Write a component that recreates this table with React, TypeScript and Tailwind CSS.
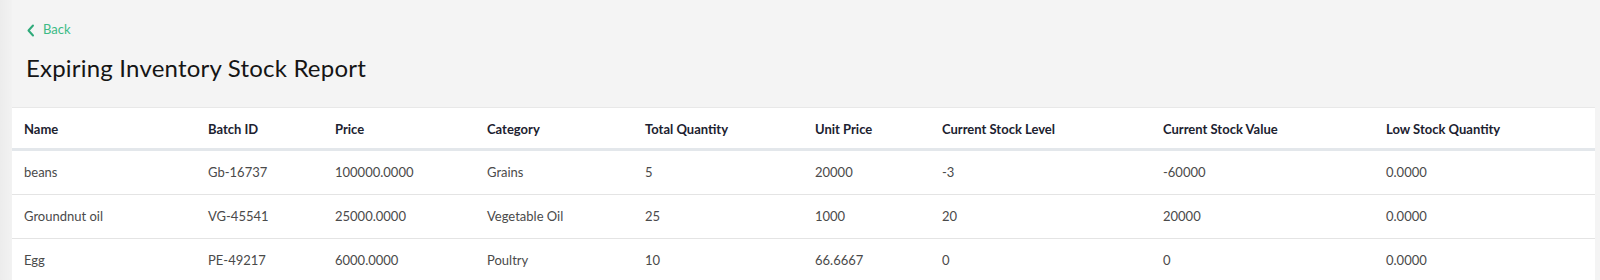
import React from "react";

const cols = ["Name","Batch ID","Price","Category","Total Quantity","Unit Price","Current Stock Level","Current Stock Value","Low Stock Quantity"];
const rows = [
  ["beans","Gb-16737","100000.0000","Grains","5","20000","-3","-60000","0.0000"],
  ["Groundnut oil","VG-45541","25000.0000","Vegetable Oil","25","1000","20","20000","0.0000"],
  ["Egg","PE-49217","6000.0000","Poultry","10","66.6667","0","0","0.0000"],
];
const grid = "grid grid-cols-[184px_127px_152px_158px_170px_127px_221px_223px_1fr]";

export default function App() {
  return (
    <div className="w-[1600px] h-[280px] overflow-hidden bg-[#f4f4f4] flex" style={{ fontFamily: "Lato, 'Open Sans', sans-serif" }}>
      <div className="w-[12px] shrink-0 bg-gradient-to-r from-[#ececec] to-[#f2f2f2]" />
      <div className="flex-1 flex flex-col">
        <div className="h-[107px] shrink-0 pl-[14px] flex flex-col">
          <div className="mt-[21px] flex items-center gap-[8px] text-[#3cbb86] text-[13px] h-[18px]">
            <svg width="9" height="13" viewBox="0 0 9 13" fill="none"><path d="M7 1.5 L2.5 6.5 L7 11.5" stroke="#2faa7a" strokeWidth="2" strokeLinecap="round" strokeLinejoin="round"/></svg>
            <span>Back</span>
          </div>
          <h1 className="mt-[14px] text-[24px] leading-[30px] tracking-[0.2px] text-[#151515] font-normal">Expiring Inventory Stock Report</h1>
        </div>
        <div className="w-[1583px] shrink-0 bg-white border-t border-[#e8e8e8]">
          <div className={`${grid} h-[43px] pt-[3px] items-center border-b-[3px] border-[#e3e7eb]`}>
            {cols.map((c) => (
              <div key={c} className="pl-[12px] text-[13px] font-bold text-[#1c2230] whitespace-nowrap">{c}</div>
            ))}
          </div>
          {rows.map((r, i) => (
            <div key={i} className={`${grid} h-[44px] pt-[1px] items-center border-b border-[#e4e4e4]`}>
              {r.map((c, j) => (
                <div key={j} className="pl-[12px] text-[13px] text-[#4a4a4a] whitespace-nowrap">{c}</div>
              ))}
            </div>
          ))}
        </div>
      </div>
    </div>
  );
}
